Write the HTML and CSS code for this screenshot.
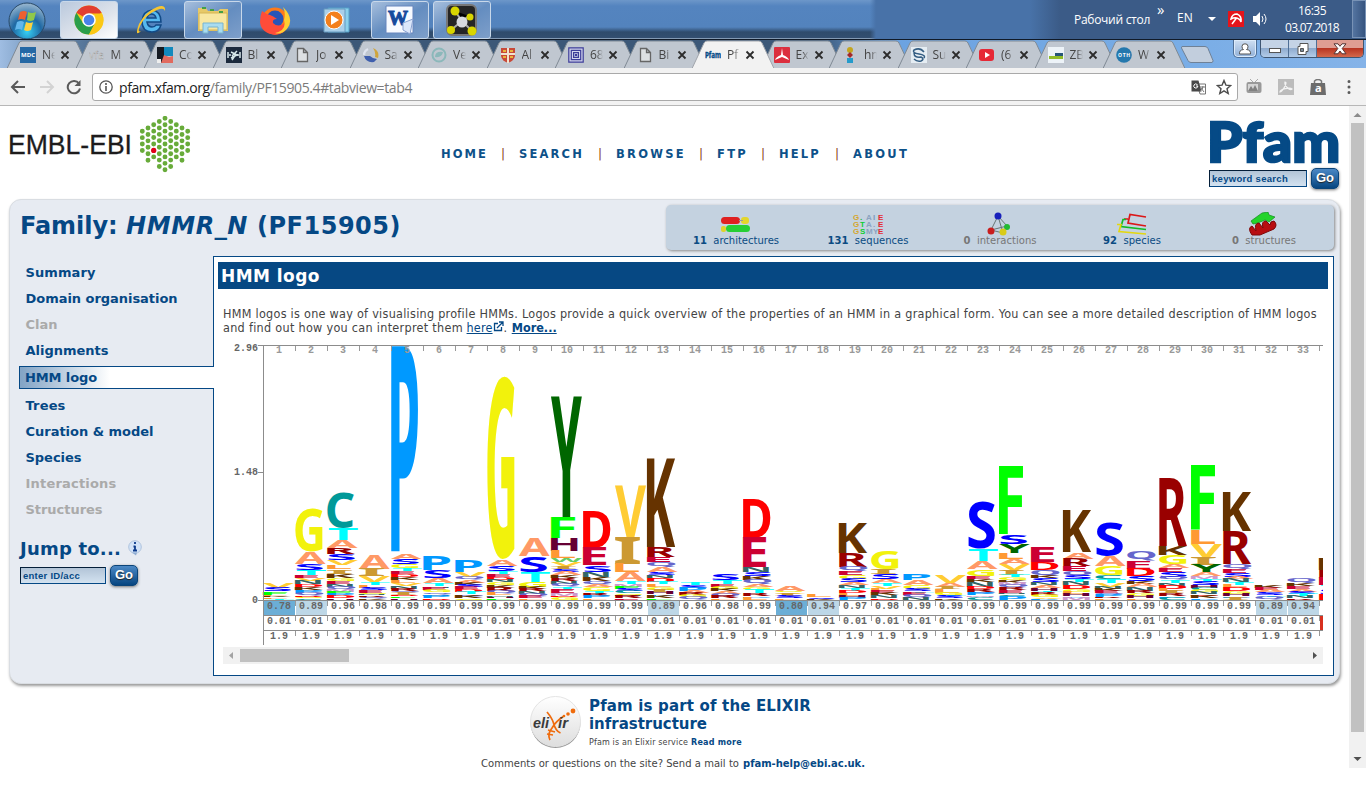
FILE: index.html
```
<!DOCTYPE html>
<html lang="en">
<head>
<meta charset="utf-8">
<title>Pfam: Family: HMMR_N (PF15905)</title>
<link rel="stylesheet" href="styles.css">
</head>
<body>
<div class="taskbar">
  <div class="task start"><svg width="40" height="38" viewBox="0 0 40 38"><defs><radialGradient id="orb" cx=".5" cy=".8" r=".8"><stop offset="0" stop-color="#35d0f5"/><stop offset=".5" stop-color="#2069a4"/><stop offset="1" stop-color="#9db9d0"/></radialGradient></defs><circle cx="20" cy="20" r="18" fill="url(#orb)" stroke="#284968"/><path d="M13 11q4-2 7 0l-2 8q-4-2-7 0z" fill="#ee6030"/><path d="M21 11q4 2 8 0l-2 8q-4 2-7 0z" fill="#8fc84a"/><path d="M10 21q4-2 7 0l-2 8q-3-2-7 0z" fill="#63b7ed"/><path d="M19 21q4 2 7 0l-2 8q-4 2-7 0z" fill="#ffd23f"/></svg></div>
  <div class="task lit"><svg width="30" height="30" viewBox="0 0 30 30"><circle cx="15" cy="15" r="14.5" fill="#fbc816"/><path d="M15 15L2.4 7.7A14.5 14.5 0 0 1 27.6 7.7z" fill="#e23e30"/><path d="M2.4 7.7A14.5 14.5 0 0 0 15 29.5L21 18 9 18z" fill="#2a9e4b"/><path d="M15 8.5h12.9A14.5 14.5 0 0 1 15 29.5l6-11z" fill="#fbc816"/><circle cx="15" cy="15" r="6.8" fill="#fff"/><circle cx="15" cy="15" r="5.3" fill="#4a82ea"/></svg></div>
  <div class="task"><svg width="32" height="32" viewBox="0 0 32 32"><path d="M26 18H12q1 5 5 5 3 0 4-2h5q-2 7-9 7-10 0-10-11Q8 7 17 6q9 1 9 12zM12 14h9q-1-4-4.500-4T12 14z" fill="#56b8ee" stroke="#124a86" stroke-width="1.500"/><path d="M6 27Q-1 34 4 20 10 8 22 3q9-3 8 4-1-4-8-1Q10 11 5 22q-3 7 1 5z" fill="#f6c531"/></svg></div>
  <div class="task open"><svg width="34" height="32" viewBox="0 0 34 32"><path d="M2 4h8l2 3h10l2-2h8v22H2z" fill="#e7c968"/><path d="M3 9h28v17H3z" fill="#f8e7a1" stroke="#d4b557"/><path d="M6 4h4M14 6h4M23 8h4" stroke="#43a047" stroke-width="2"/><path d="M7 29V19h20v10h-5v-6H12v6z" fill="#a9dcf0" stroke="#78b4cf"/></svg></div>
  <div class="task"><svg width="32" height="32" viewBox="0 0 32 32"><circle cx="16" cy="17" r="13.500" fill="#ff7a1a"/><circle cx="16" cy="15" r="8.500" fill="#2955b8"/><path d="M3 7q4 3 8 4 3 1 7 4-5 0-4 4 5 5 12 0 4-7-1-13 7 5 5 14-3 10-14 11Q2 29 1 18 1 12 3 7z" fill="#ff4c39"/><path d="M24 3q12 12 4 22-6 6-12 4 12-3 9-13 2-7-1-13z" fill="#ffcf32"/></svg></div>
  <div class="task"><svg width="30" height="28" viewBox="0 0 30 28"><path d="M6 2h21v24H6z" fill="#8bd0ec" stroke="#559fc6"/><path d="M2 3h21v23H2z" fill="#a9cfe9" stroke="#6799be"/><circle cx="12" cy="14" r="9" fill="#f3801d" stroke="#fff"/><path d="M9 9l8 5-8 5z" fill="#fff"/></svg></div>
  <div class="task open word"><svg width="32" height="30" viewBox="0 0 32 30"><path d="M2 1h27v27H2z" fill="#f7faff" stroke="#6685bd"/><text x="4" y="20" class="word-w">W</text><path d="M19 18l10-4-3 15-7-4z" fill="#dce7fa" stroke="#8aa2d0"/></svg></div>
  <div class="task open mol"><svg width="32" height="34" viewBox="0 0 32 34"><rect x="1" y="2" width="29" height="30" rx="5" fill="#252525" stroke="#777" stroke-width="2"/><path d="M9 8l7 10 7-5M16 18l9 9M16 18L5 27" stroke="#aaa" stroke-width="2"/><circle cx="9" cy="8" r="4.500" fill="#d8d500"/><circle cx="24" cy="14" r="3.500" fill="#d8d500"/><circle cx="26" cy="28" r="4.500" fill="#d8d500"/><circle cx="5" cy="27" r="4" fill="#d8d500"/><circle cx="16" cy="19" r="5.500" fill="#d7dae0"/></svg></div>
  <div class="tray">
    <span class="desk" data-w="76">Рабочий стол</span><span class="chev">»</span><span class="lang">EN</span>
    <svg class="tri" width="8" height="4"><path d="M0 0h8L4 4z" fill="#fff"/></svg>
    <svg class="avira" width="16" height="16"><path d="M0 0h16v16H0z" fill="#e5141b"/><path d="M3 8q1-5 6-5 5 2 4 8-1-3-3-3.500Q7 6 3 8zM8.500 7L4 13" stroke="#fff" fill="none" stroke-width="1.500"/></svg>
    <svg class="vol" width="16" height="16"><path d="M1 5h3l4-4v14l-4-4H1z" fill="#fff"/><path d="M10 5q2 3 0 6M12 3q4 5 0 10" stroke="#fff" fill="none"/></svg>
    <div class="clock"><span data-w="28">16:35</span><span data-w="54">03.07.2018</span></div><div class="peek"></div>
  </div>
</div>

<div class="tabstrip"><div class="tabs" id="tabs"></div>
  <svg class="newtab" width="36" height="20"><path d="M3 1.500h23q2 0 3 2l5 12q0 2-1 2H12q-2 0-3-2L2.500 3q0-1.500.5-1.500z" fill="#c2cedd" stroke="#6f8196"/></svg>
  <div class="user"><svg width="14" height="12"><path d="M4 3.500Q4 .8 7 .8t3 2.700Q10 6 8.500 6.500 13 7 12.500 11h-11Q1 7 5.500 6.500 4 6 4 3.500z" fill="#fff" stroke="#555"/></svg></div>
  <div class="wincontrols"><span class="wc"><svg width="14" height="12"><rect x="1.500" y="5.500" width="11" height="4" fill="#fff" stroke="#555"/></svg></span><span class="wc"><svg width="14" height="12"><path d="M4 .5h8v8h-2v3H2v-8h2z" fill="#fff" stroke="#555"/><path d="M4.500 5.500h3v3h-3z" fill="#789" stroke="#555"/></svg></span><span class="wc close"><svg width="14" height="12"><path d="M1 .8h4l2 2.500 2-2.500h4L9.200 5.500 13 10.800H9L7 8l-2 2.800H1l3.800-5.300z" fill="#fff" stroke="#533"/></svg></span></div>
</div>

<div class="toolbar">
  <svg class="back" width="16" height="16"><path d="M15 8H2M8 2L2 8l6 6" fill="none" stroke="#5a5a5a" stroke-width="2"/></svg>
  <svg class="fwd" width="16" height="16"><path d="M1 8h13M8 2l6 6-6 6" fill="none" stroke="#d3d3d3" stroke-width="2"/></svg>
  <svg class="reload" width="16" height="16"><path d="M13 4.500A6.200 6.200 0 1 0 14 9.500" fill="none" stroke="#5a5a5a" stroke-width="2"/><path d="M14.500 1v6h-6z" fill="#5a5a5a"/></svg>
  <div class="omnibox">
    <svg width="14" height="14"><circle cx="7" cy="7" r="6.200" fill="none" stroke="#555" stroke-width="1.300"/><path d="M7 6v5M7 3v2" stroke="#555" stroke-width="1.600"/></svg>
    <span class="url" data-w="293"><b>pfam.xfam.org</b>/family/PF15905.4#tabview=tab4</span>
    <svg class="translate" width="15" height="15"><path d="M6 4h8.500v10H9z" fill="#fff" stroke="#777"/><path d="M.5.500h7l3 11h-10z" fill="#484848"/><path d="M6.500 4.500Q4 3 3 5t1 3 3-2H5" stroke="#fff" fill="none"/><path d="M9 7h5M12 6q0 4-3 5M10 8l3 4" stroke="#777" fill="none"/></svg>
    <svg class="star" width="16" height="16"><path d="M8 1.500l1.900 4.600 4.800.4-3.700 3.200 1.200 4.800L8 11.900l-4.200 2.600L5 9.700 1.300 6.500l4.800-.4z" fill="none" stroke="#4c4c4c" stroke-width="1.400"/></svg>
  </div>
  <svg class="ext1" width="16" height="16"><path d="M4 0l3 3M12 0L9 3" stroke="#aaa"/><rect x=".5" y="3" width="15" height="11" rx="2" fill="#999"/><rect x="2" y="5" width="10" height="7" fill="#d4d4d4"/><path d="M2 12l3-5 2 3 2-4 3 6z" fill="#808080"/></svg>
  <svg class="ext2" width="16" height="16"><path d="M0 0h16v16H0z" fill="#bcbcbc"/><path d="M7 3c3 0-2 9-5 10 0-3 10-5 12-3-2 2-8-3-7-7z" fill="none" stroke="#f3f3f3" stroke-width="1.200"/></svg>
  <svg class="ext3" width="16" height="16"><path d="M4.500 4V2q3.500-3 7 0v2" fill="none" stroke="#777" stroke-width="1.500"/><path d="M1 4h14l1 12H0z" fill="#6c6c6c"/><text x="5" y="13" class="ext-a">a</text></svg>
  <svg class="dots" width="4" height="16"><path d="M2 2.500v.01M2 8v.01M2 13.500v.01" stroke="#5a5a5a" stroke-width="3" stroke-linecap="round"/></svg>
</div>

<div class="viewport">
<div class="page">
  <div class="header">
    <svg class="embl" width="184" height="58"><text x="-1" y="37.500" class="embl-t" textLength="124" lengthAdjust="spacingAndGlyphs">EMBL-EBI</text>
      <path class="hexdots" d="M133.300 15.200v25.700M139 12v32.200M144.700 8.700v38.600M150.300 5.500v45.100M156 2.300v51.500M161.700 5.500v45.100M167.300 8.700v38.600M173 12v32.200M178.700 15.200v25.700"/><circle cx="144.700" cy="34.400" r="2.600" fill="#e2001a"/></svg>
    <div class="nav"><div><a data-w="47">HOME</a><i>|</i></div><div><a data-w="65">SEARCH</a><i>|</i></div><div><a data-w="70">BROWSE</a><i>|</i></div><div><a data-w="31">FTP</a><i>|</i></div><div><a data-w="42">HELP</a><i>|</i></div><div><a data-w="56">ABOUT</a></div></div>
    <div class="brand"><svg width="132" height="45"><text x="-2" y="43" class="pfam-t" textLength="133" lengthAdjust="spacingAndGlyphs">Pfam</text></svg>
      <div class="search"><span class="field kw"><span data-w="76">keyword search</span></span><span class="go">Go</span></div></div>
  </div>

  <div class="family">
    <div class="titlerow"><h1><span data-w="106">Family: </span><em data-w="122">HMMR_N</em><span data-w="144">(PF15905)</span></h1>
      <div class="stats">
        <div><svg width="32" height="24"><rect x="1" y="5" width="19" height="7" rx="3.500" fill="#df2020"/><rect x="21" y="5" width="8" height="7" rx="3" fill="#e3d62b"/><path d="M19 8.500h4M5 17h4" stroke="#999"/><rect x="1" y="14" width="5" height="6" rx="2" fill="#dfd22b"/><rect x="6" y="13" width="24" height="7" rx="3.500" fill="#26cf35"/></svg><span data-w="86"><b>11</b>&nbsp; architectures</span></div>
        <div><svg width="32" height="24" class="seq"><text x="1" y="8" fill="#d5a62e">G</text><text x="8" y="8" fill="#22b244">.</text><text x="14" y="8" fill="#8ba3c1">A</text><text x="21" y="8" fill="#7f9dbf">I</text><text x="26" y="8" fill="#e32b35">E</text><text x="1" y="15" fill="#d5a62e">G</text><text x="8" y="15" fill="#10cd32">T</text><text x="14" y="15" fill="#8ba3c1">A</text><text x="21" y="15" fill="#8ba3c1">.</text><text x="26" y="15" fill="#e32b35">E</text><text x="1" y="22" fill="#d5a62e">G</text><text x="8" y="22" fill="#10cd32">S</text><text x="14" y="22" fill="#8ba3c1">M</text><text x="21" y="22" fill="#8ba3c1">Y</text><text x="26" y="22" fill="#e32b35">E</text></svg><span data-w="81"><b>131</b>&nbsp; sequences</span></div>
        <div class="off"><svg width="32" height="24"><path d="M14 4L7 18l12 3 4-7-9-10 5 17M7 18l16-4" fill="none" stroke="#677" /><circle cx="14" cy="4" r="3.500" fill="#1720bb"/><circle cx="7" cy="19" r="3.500" fill="#c91e1e"/><circle cx="23" cy="15" r="3" fill="#22ba32"/><circle cx="19" cy="20" r="3.500" fill="#d9cb18"/></svg><span data-w="73"><b>0</b>&nbsp; interactions</span></div>
        <div><svg width="32" height="24"><path d="M30 5L14 2.500l-2 8.500 18 3M12 7H8" fill="none" stroke="#db1717" stroke-width="1.700"/><path d="M30 17.500L5 14.500l2-7h3" fill="none" stroke="#12bb24" stroke-width="1.700"/><path d="M30 22L3 19.500l2-7H1" fill="none" stroke="#e3d710" stroke-width="1.700"/></svg><span data-w="58"><b>92</b>&nbsp; species</span></div>
        <div class="off"><svg width="32" height="24"><path d="M3 9L14 1l6-1 1 3 6 2-6 5-4-2-7 3-5 1z" fill="#23d42b" stroke="#138b20" stroke-width=".7"/><path d="M4 23q-5-7 0-9l4 5q-2-8 3-8l4 5q-2-7 3-7l4 4q0-4 4-4 4 4 0 8L12 23z" fill="#b80d10" stroke="#7d0809"/></svg><span data-w="64"><b>0</b>&nbsp; structures</span></div>
      </div></div>
    <div class="main">
      <div class="side">
        <ul><li><span data-w="70">Summary</span></li><li><span data-w="152">Domain organisation</span></li><li class="off"><span data-w="32">Clan</span></li><li><span data-w="83">Alignments</span></li><li class="active"><span data-w="72">HMM logo</span></li><li><span data-w="40">Trees</span></li><li><span data-w="128">Curation &amp; model</span></li><li><span data-w="56">Species</span></li><li class="off"><span data-w="91">Interactions</span></li><li class="off"><span data-w="77">Structures</span></li></ul>
        <div class="jump"><h2 data-w="101">Jump to...</h2><svg width="16" height="16"><circle cx="8" cy="7" r="6.300" fill="#d2e3f8" stroke="#b0c4de"/><path d="M5 12.500l4 3 1-3z" fill="#8dacd2"/><path d="M8 6v5M8 2v2M6.500 6.500h2M6 10.500h4" stroke="#0d3b8c" stroke-width="1.800"/></svg></div>
        <div class="search"><span class="field"><span data-w="57">enter ID/acc</span></span><span class="go">Go</span></div>
      </div>
      <div class="content">
        <h3><span data-w="99">HMM logo</span></h3>
        <p><span data-w="1094">HMM logos is one way of visualising profile HMMs. Logos provide a quick overview of the properties of an HMM in a graphical form. You can see a more detailed description of HMM logos</span><br><span data-w="240">and find out how you can interpret them</span> <u data-w="26">here</u><svg width="11" height="11"><path d="M5 2.500H1.500v7h7V6M4 7l5.500-5.500M6 1h4v4" fill="none" stroke="#054885" stroke-width="1.300"/></svg>. <b><u data-w="45">More...</u></b></p>
        <svg class="logo" id="logo" width="1100" height="305" viewBox="223 340 1100 305"></svg>
        <div class="hscroll"><svg width="17" height="17"><path d="M10 5v7L6 8.500z" fill="#a3a3a3"/></svg><div class="hthumb"></div><svg class="r" width="17" height="17"><path d="M7 5v7l4-3.500z" fill="#505050"/></svg></div>
      </div>
    </div>
  </div>

  <div class="footer">
    <div class="elixir"><svg width="54" height="54"><defs><linearGradient id="disc" x2="0" y2="1"><stop stop-color="#fff"/><stop offset="1" stop-color="#dedede"/></linearGradient></defs><circle cx="26.500" cy="27" r="25" fill="#999"/><circle cx="26.500" cy="25.500" r="25" fill="url(#disc)" stroke="#e4e4e4"/><path d="M18 16q5 6 6.500 11 2 8 7 10M35 20q-8 5-12 12-5 6-2 12M19 34l7 2M18 38l6 1" fill="none" stroke="#ef6b0c" stroke-width="1.700"/><circle cx="35" cy="20" r="1.300" fill="#ef6b0c"/><circle cx="39" cy="18" r="1.800" fill="#ef6b0c"/><circle cx="44" cy="15" r="2.400" fill="#ef6b0c"/><text x="4" y="32" class="elx" textLength="16" lengthAdjust="spacingAndGlyphs">eli</text><text x="29" y="32" class="elx" textLength="10" lengthAdjust="spacingAndGlyphs">ir</text></svg>
      <div><h4><span data-w="222">Pfam is part of the ELIXIR</span><br><span data-w="118">infrastructure</span></h4><div class="tiny"><span data-w="99">Pfam is an Elixir service</span><b data-w="51">Read more</b></div></div></div>
    <div class="contact"><span data-w="258">Comments or questions on the site? Send a mail to</span><b data-w="122">pfam-help@ebi.ac.uk.</b></div>
  </div>
</div>
<div class="vscroll"><svg width="17" height="17"><path d="M4.500 11h8L8.500 7z" fill="#8b8b8b"/></svg><div class="vthumb"></div><svg class="b" width="17" height="17"><path d="M4.500 6h8l-4 4z" fill="#505050"/></svg></div>
</div>
<script src="app.js"></script>
</body>
</html>
```
FILE: styles.css
```
* { box-sizing: border-box; }
body { margin: 0; width: 1366px; height: 794px; overflow: hidden; background: #fff; display: flex; flex-direction: column; font-family: "DejaVu Sans", Verdana, sans-serif; color: #444; }
svg { display: block; flex: none; }
[data-w] { display: inline-block; white-space: nowrap; }

.taskbar { height: 40px; flex: none; display: flex; padding-left: 0; border-bottom: 1px solid #101a28; background: linear-gradient(90deg, transparent 870px, #4872a8 876px, #4872a8 1030px, #3b5b87 1060px), linear-gradient(#6d97c9 0, #5484bf 6px, #5383bd 27px, #2f4b6c 32px, #334e70 38px, #8399b3 38px); font-family: "Open Sans", sans-serif; }
.task { width: 62px; height: 39px; flex: none; display: flex; align-items: center; justify-content: center; }
.task.start { width: 60px; padding-right: 6px; }
.task.lit, .task.open { width: 58px; margin: 1px 4px 0 0; height: 38px; border: 1px solid #c8d8ea; border-radius: 3px; background: linear-gradient(150deg, #a7bfdd, #648dc0 50%, #7e9fca); }
.task.open { margin: 1px 2px 0 2px; }
.task.lit { background: linear-gradient(150deg, #bac9dd, #dfe4ec 60%, #fff); margin-right: 2px; }
.task.word { margin: 1px 2px 0 3px; }
.word-w { font: bold 20px "Liberation Serif", serif; fill: #164a9c; stroke: #164a9c; }
.tray { display: flex; align-items: center; margin-left: auto; color: #fff; font-size: 12px; height: 38px; }
.chev { align-self: flex-start; margin: -1px 0 0 7px; font-size: 15px; line-height: 20px; width: 10px; }
.lang { margin: -4px 0 0 10px; width: 16px; }
.tri { margin-left: 15px; }
.avira { margin-left: 12px; }
.vol { margin-left: 8px; }
.clock { display: flex; flex-direction: column; align-items: center; width: 60px; line-height: 17px; margin-left: 14px; }
.peek { width: 14px; height: 38px; margin-left: 10px; border: 1px solid #7892b5; background: linear-gradient(90deg, #5474a0, #36547f); }

.tabstrip { height: 28px; flex: none; display: flex; background: linear-gradient(90deg, #9fbde2 0, #7194ba 40px, #3c5878 130px, #3c5878 780px, #3c5878 820px, #6ba2e0 880px, #79ade6 1180px, #85b3e8 1366px); }
.tabs { display: flex; padding-left: 7px; width: 1179px; flex: none; }
.tab { width: 68.5px; height: 28px; position: relative; flex: none; display: flex; align-items: center; padding-left: 13px; }
.tab .shape { position: absolute; left: 0; top: 0; }
.tab .fav { position: relative; margin-top: 2px; }
.tab .name { position: relative; width: 13px; margin: 1px 0 0 6px; overflow: hidden; white-space: nowrap; font: 12px "Open Sans", sans-serif; color: #444; -webkit-mask-image: linear-gradient(90deg, #000 50%, transparent); }
.tab .x { position: relative; margin: 2px 0 0 5px; }
.newtab { margin-top: 5px; }
.user { width: 24px; height: 18px; margin-left: 18px; display: flex; justify-content: center; align-items: center; border: 1px solid #4f6f96; border-top: 0; border-radius: 0 0 5px 5px; background: linear-gradient(#cfdff2, #90b0d8); box-shadow: inset 0 0 0 1px #dcebfb; }
.wincontrols { display: flex; height: 18px; margin-left: 3px; border: 1px solid #3f5672; border-top: 0; border-radius: 0 0 5px 5px; overflow: hidden; }
.wc { width: 28px; display: flex; align-items: center; justify-content: center; background: linear-gradient(#c4d3e6 45%, #8fabce 50%, #b3cce9); border-right: 1px solid #4f6f96; }
.wc.close { width: 46px; border: 0; background: linear-gradient(#df9d92 45%, #b83522 50%, #d4694c); }

.toolbar { height: 38px; flex: none; display: flex; align-items: center; background: #f2f2f2; border-top: 1px solid #f2f2f2; border-bottom: 1px solid #b7b7b7; padding-left: 10px; }
.fwd { margin-left: 13px; }
.reload { margin-left: 11px; }
.omnibox { width: 1146px; height: 28px; margin-left: 10px; display: flex; align-items: center; padding: 0 6px 0 6px; background: #fff; border: 1px solid #a9a9a9; border-radius: 3px; }
.url { font: 14px "Open Sans", sans-serif; color: #7b7b7b; margin-left: 6px; }
.url b { font-weight: 400; color: #222; }
.translate { margin-left: auto; }
.star { margin-left: 10px; margin-right: -1px; }
.ext1 { margin-left: 8px; }
.ext2, .ext3 { margin-left: 16px; }
.ext-a { font: bold 11px "Open Sans", sans-serif; fill: #fff; }
.dots { margin-left: 21px; }

.viewport { height: 662px; flex: none; display: flex; }
.page { width: 1349px; padding-left: 9px; }
.header { height: 93px; display: flex; align-items: flex-start; }
.embl { margin-top: 10px; }
.embl-t { font: 27px "Liberation Sans", Arial, sans-serif; fill: #1d1b1c; stroke: #1d1b1c; stroke-width: .3; }
.hexdots { fill: none; stroke: #68ab3a; stroke-width: 4.900; stroke-linecap: round; stroke-dasharray: 0 6.437; }
.nav { display: grid; grid-template-columns: 78px 97px 101px 62px 74px 60px; margin: 40px 0 0 248px; font-weight: bold; font-size: 11.500px; line-height: 16px; color: #0d5189; }
.nav div { display: flex; justify-content: space-between; padding-right: 12px; }
.nav i { font-style: normal; font-weight: normal; font-size: 12px; color: #8a3a20; width: 6px; }
.brand { margin: 13px 0 0 296px; width: 132px; }
.pfam-t { font: 900 55px Lato, sans-serif; fill: #054a86; stroke: #054a86; stroke-width: 2.500; }
.search { display: flex; align-items: center; }
.brand .search { margin-top: 4px; }
.field { width: 86px; height: 17px; border: 1px solid #054885; border-top: 1px solid #041e38; border-left: 1px solid #041e38; background: linear-gradient(#b2c4d7, #d3e2f0); color: #054885; font: bold 9.500px/15px "Liberation Sans", sans-serif; padding-left: 2px; white-space: nowrap; }
.kw { width: 98px; }
.go { width: 28px; height: 21px; margin-left: 4px; border-radius: 5px; background: linear-gradient(#4b88c5, #064580); border: 1px solid #0b4479; color: #fff; font: bold 13px/18px "Liberation Sans", sans-serif; text-align: center; box-shadow: 0 1px 3px #777; text-shadow: 0 1px 1px #222; }

.family { width: 1331px; height: 485px; background: #e7ebf2; border-radius: 12px; border: 1px solid #d9dde2; box-shadow: 1px 2px 3px #999; }
.titlerow { display: flex; justify-content: space-between; height: 56px; padding: 5px 5px 0 10px; }
h1, h2, h3, h4 { margin: 0; color: #054885; font-weight: bold; }
h1 { font-size: 24px; line-height: 42px; display: flex; }
h1 [data-w] { white-space: pre; }
h1 em + span { margin-left: 9px; }
.stats { width: 668px; height: 45px; display: grid; grid-template-columns: repeat(5, 132px); padding-left: 4px; background: #c4d2e0; border-radius: 5px; box-shadow: 1px 1px 3px #888; }
.stats div { display: flex; flex-direction: column; align-items: center; padding-top: 7px; font-size: 10px; line-height: 11px; color: #0a4b82; }
.stats .off { color: #777; }
.stats span { margin-top: -1px; }
.seq text { font: bold 8px "Liberation Sans", sans-serif; }
.main { display: flex; }
.side { width: 203px; position: relative; padding-left: 10px; padding-top: 4px; font-weight: bold; color: #054885; }
ul { list-style: none; margin: 0; padding: 0; font-size: 13px; }
li { height: 26px; line-height: 26px; padding-left: 5.500px; }
li.off { color: #aaa; }
li.active { width: 195px; height: 23px; line-height: 22px; margin: 2px 0 4px -1px; padding-left: 5px; position: relative; border: 1px solid #054885; border-right: 0; background: linear-gradient(90deg, #84a5c6 2px, #fff 90px); }
li.active ~ li { margin-top: 0; }
.jump { display: flex; align-items: center; height: 32px; margin: 10px 0 0 0; }
.jump h2 { font-size: 18px; line-height: 30px; }
.jump svg { margin: -3px 0 0 6px; }
.content { width: 1121px; height: 420px; border: 1px solid #054885; background: #fff; padding: 5px 5px 0 4px; }
h3 { height: 27px; line-height: 29px; background: #064883; color: #fff; font-size: 17px; padding-left: 3px; }
p { margin: 18px 0 0 5px; height: 33px; font-size: 12.500px; line-height: 14px; font-family: "DejaVu Sans Condensed", "DejaVu Sans", sans-serif; font-stretch: condensed; }
p svg { display: inline-block; }
p u { color: #054885; }
p b { margin-left: 1px; }
.logo { margin-left: 5px; }
.row { font: bold 10px "Liberation Mono", monospace; fill: #666; text-anchor: middle; }
.num { fill: #999; }
.ax { text-anchor: end; }
.hscroll { width: 1100px; height: 17px; margin: 2px 0 0 5px; background: #f1f1f1; display: flex; align-items: center; }
.hthumb { width: 109px; height: 13px; background: #c1c1c1; }
.r { margin-left: auto; }

.footer { display: flex; flex-direction: column; }
.elixir { display: flex; margin: 12px 0 0 520px; height: 58px; }
.elx { font: italic bold 15px "Liberation Sans", sans-serif; fill: #3b3b3b; }
h4 { font-size: 15px; line-height: 18px; margin: 1px 0 0 6px; }
.tiny { display: flex; gap: 3px; font-size: 8px; line-height: 10px; margin: 5px 0 0 6px; }
.footer b { color: #054885; }
.contact { display: flex; gap: 4px; font-size: 10px; line-height: 13px; margin: 3px 0 0 472px; }
.vscroll { width: 17px; background: #f1f1f1; display: flex; flex-direction: column; align-items: center; }
.vthumb { width: 13px; height: 609px; background: #c1c1c1; }
.b { margin-top: auto; }
```
FILE: app.js
```
// Browser tabs: title and favicon drawing
var page = '<path d="M3.500 1.500h6l4 4v9h-10zM9.500 1.500v4h4" fill="#dde0e3" stroke="#666" stroke-width="1.300"/>';
var tabs = [
  ["N‹", '<path d="M0 0h16v16H0z" fill="#2468a5"/><text x="1" y="10" font-size="6" font-weight="bold" fill="#fff" textLength="14">MDC</text>'],
  ["M", '<text x="0" y="12" font-size="11" fill="#f5f5f5" stroke="#999" stroke-width=".4" textLength="15">vfa</text>'],
  ["Co", '<path d="M0 0h7v16H0z" fill="#151a22"/><path d="M7 0h9v9H7z" fill="#1289bd"/><path d="M7 8l5 2 4-1v7H4z" fill="#e16a5e"/><path d="M0 12h4v4H0z" fill="#eee"/>'],
  ["Bl", '<path d="M0 0h16v16H0z" fill="#1c2a3d"/><path d="M2 5v6M4 7v2M14 5v6M12 7v2M5 5l6 3-6 3M11 4L6 9M10 7l-4 6" stroke="#d7e8ea" stroke-width="1.500" fill="none"/>'],
  ["Jo", page],
  ["Sa", '<path d="M1 9q2 7 10 6l3-3q-4 0-7-3z" fill="#3f5fad"/><path d="M10 1q7 3 5 10l-3-1q1-5-2-9z" fill="#d0a53d"/><path d="M1 8q0-4 4-6" stroke="#dfe4ef" stroke-width="2.500" fill="none"/>'],
  ["Ve", '<circle cx="8" cy="8" r="6.500" fill="none" stroke="#8bb8ba" stroke-width="2"/><path d="M4 10q0-6 8-5-1 6-8 5l-1 3" fill="#8bb8ba"/>'],
  ["Al", '<path d="M1 1h14v8q-1 5-7 7-6-2-7-7z" fill="#c84938"/><path d="M8 1v15M1 7h14" stroke="#f1e2cf" stroke-width="2"/><path d="M3 4h3M10 4h3M3 10h3M10 10h3" stroke="#e9b53c" stroke-width="2"/>'],
  ["68", '<path d="M.8.8h14.400v14.400H.8zM3.300 3.300h9.400v9.400H3.300zM5.600 5.600h4.800v4.800H5.600zM7.500 7.500h1v1h-1z" fill="#d2d4ec" stroke="#3c3c99" stroke-width="1.200"/>'],
  ["Bi", page],
  ["Pf", '<text x="0" y="11" font-size="8" font-weight="bold" fill="#054a86" stroke="#054a86" stroke-width=".4" textLength="16" lengthAdjust="spacingAndGlyphs">Pfam</text>'],
  ["Ex", '<rect width="16" height="16" rx="1" fill="#dc2f3e"/><path d="M8 1l1 7-1 2-1-2zM7 8l1 2-7 3q1-3 6-5zM9 8q5 2 6 5L8 10z" fill="#fff"/>'],
  ["hn", '<circle cx="8" cy="3" r="3" fill="#c4a51f"/><path d="M8 5l3 3-3 3-3-3z" fill="#a32a2a"/><path d="M5 11h6v5H5z" fill="#249bcb"/>'],
  ["Su", '<path d="M0 0h16v16H0z" fill="#e5edf3"/><path d="M13 5Q9 0 3 3q-2 3 5 4 7 1 5 4M3 6q0 5 7 4 4 2 0 4-4 1-7-2" fill="none" stroke="#355e83" stroke-width="1.500"/>'],
  ["(6", '<rect y="2" width="15" height="12" rx="3" fill="#e62835"/><path d="M6 5v6l5-3z" fill="#fff"/>'],
  ["ZB", '<path d="M0 0h16v16H0z" fill="#edf3f8"/><path d="M1 9h14v3H1z" fill="#92bd28"/><path d="M7 6h8v3H7z" fill="#275678"/>'],
  ["W", '<circle cx="8" cy="8" r="7.800" fill="#2478ad"/><text x="2" y="10" font-size="5" font-weight="bold" fill="#fff" textLength="12">OTH</text>']
];
tabs[0][0] = "Ne";
document.getElementById("tabs").innerHTML = tabs.map(function (t, i) {
  var on = i === 10;
  return '<div class="tab"' + (on ? ' style="z-index:2"' : '') + '><svg class="shape" width="84" height="28"><path d="M0 28.500L12 3q1-2 3-2h52q2 0 3 2l12 25.500" fill="' +
    (on ? '#f2f2f2' : '#c0c7d0') + '" stroke="' + (on ? '#a0a4aa' : '#7f8994') + '"/></svg><svg class="fav" width="16" height="16" font-family="Open Sans">' + t[1] +
    '</svg><span class="name">' + t[0] + '</span><svg class="x" width="10" height="10"><path d="M1.500 1.500l7 7M8.500 1.500l-7 7" stroke="#2c2c2c" stroke-width="1.800"/></svg></div>';
}).join("");

// Fit labels to their nominal widths
document.querySelectorAll("[data-w]").forEach(function (el) {
  var n = el.textContent.length;
  el.style.letterSpacing = ((+el.dataset.w - el.getBoundingClientRect().width) / n).toFixed(3) + "px";
});

// HMM logo: residues with the top of each, in thirds of a pixel
var colour = { A: "#ff9966", C: "#009999", D: "#ff0000", E: "#cc0033", F: "#00ff00", G: "#f2f20c", H: "#660033", I: "#cc9933", K: "#663300", L: "#ff9933", M: "#cc99cc", N: "#336666", P: "#0099ff", Q: "#6666cc", R: "#990000", S: "#0000ff", T: "#00ffff", V: "#ffcc33", W: "#66cc66", Y: "#006600" };
var width = { A: 31, C: 27, D: 27.5, E: 23.5, F: 24, G: 27.5, H: 26.5, I: 25, K: 28.5, L: 24, M: 27, N: 26, P: 27, Q: 28.5, R: 28, S: 27, T: 29.5, V: 31, W: 31, Y: 31 };
var stacks = [
  "V729 S743 L753 F758 L765 K768 L772 T776", "G504 A636 S672 T690 E705 V713 N722 D732 K741 L749 P754 Q760 D767 G770 C774",
  "C457 T564 A600 R624 S642 V660 L675 I688 K701 G713 E722 N731 Q740 M749 F755 P761 D768 H774", "A645 I687 V708 T726 L735 S743 E751 G758 N762 R765 Q770 K775",
  "P14 A642 S657 G672 T684 E693 D702 K711 L720 V729 N738 R747 Q753 I758 D765 F769 H774", "P648 S690 A713 T729 N738 E743 G751 Q757 N763 P768 D774",
  "P660 V696 Q711 A720 K729 S736 E742 D748 T755 Q762 K768 G774", "G108 A660 S678 T693 E702 D711 N720 G727 K734 R743 Q753 L760 N766 H771 F775",
  "A594 S648 T696 G726 K740 R746 N753 Q761 E768 L774", "Y168 F531 H594 L633 W654 V666 I678 S687 A696 K706 R714 N723 Q732 T741 E750 M760 D767 G772",
  "D513 E624 S676 N695 K712 Q724 A734 G742 T753 R762 P768 L774", "V435 I591 L672 A697 T724 M732 F741 S747 C753 G759 N764 R768 E774",
  "K354 R621 E651 Q666 A681 S695 N704 D713 T725 L732 G741 I750 H757 P763 K768 F775", "T726 S735 P743 A753 R759 G765 Q772",
  "S702 T720 E732 G741 K748 A754 Q761 R768 L774", "D477 E594 N681 S697 K708 Q720 A732 G741 T750 R760 P768 L773",
  "A738 G752 V757 I762 S769 L775", "L765 S771 K776", "K552 R639 Q681 E693 G706 S716 A727 N735 T744 D753 L760 H767 P773",
  "G633 I687 S701 A718 T730 V738 L746 E753 K760 N766 D774", "P702 A720 G735 S748 T754 E759 Q766 N773", "V708 A730 I741 L747 G759 T765 S769 K775",
  "S483 T627 A663 G687 E708 K716 N725 D740 R747 Q755 P760 M766 C771", "F378 S585 Y612 L639 A657 V673 I690 T705 G712 K720 M728 Q735 R743 E751 N758 C763 P768",
  "E621 D666 Q690 K708 S715 N725 A734 H743 T752 R757 G765 V771 P776", "K507 A636 R657 E678 Q694 S706 T717 N725 D736 G747 L755 H761 P768 M773",
  "S546 A648 G678 C705 T716 V729 N742 K748 E754 Q760 P764 R770 L775", "Q636 E663 D687 S708 K722 A731 N741 R753 G760 H768 L774",
  "R412 K618 G645 A672 E684 S696 Q710 T720 N729 D737 L747 I754 R760 P768 C773", "F375 L570 V612 I651 Y675 A696 M708 T717 S726 H736 C744 G750 N757 D763 K768 P774",
  "K456 R573 Q672 E687 S700 A710 N717 T727 L735 D742 G753 H762 P768 I773", "K735 E743 A750 S757 T765 Q770",
  "Q717 K729 E738 A747 S755 T762 N768 R774", "K654 R690 E714 T735 S747 D762"
];
var occ = "0.78 0.89 0.96 0.98 0.99 0.99 0.99 0.99 0.99 0.99 0.99 0.99 0.89 0.96 0.98 0.99 0.80 0.94 0.97 0.98 0.99 0.99 0.99 0.99 0.99 0.99 0.99 0.99 0.99 0.99 0.99 0.89 0.94".split(" ");
var shade = { "0.78": "#6baed6", "0.80": "#6baed6", "0.89": "#bdd7e7", "0.94": "#bdd7e7" };
var ctx = document.createElement("canvas").getContext("2d");
ctx.font = "bold 100px 'Noto Sans'";
var out = "";
stacks.forEach(function (s, i) {
  var x0 = 263.5 + 32 * i, list = s.split(" ");
  if (shade[occ[i]]) out += '<rect x="' + (x0 + .5) + '" y="601" width="31" height="14" fill="' + shade[occ[i]] + '"/>';
  if (i === 33) out += '<path d="M1320 616h3v14h-3z" fill="#d7301f"/>';
  list.forEach(function (e, k) {
    var ch = e[0], top = +e.slice(1), end = k + 1 < list.length ? +list[k + 1].slice(1) : 779;
    // The two tallest residues leave a gap above the rest of the stack
    if (end - top > 500) end = i === 4 ? 642 : 657;
    var m = ctx.measureText(ch);
    var sx = width[ch] / (m.actualBoundingBoxRight + m.actualBoundingBoxLeft);
    var sy = (end - top) / 3 / (m.actualBoundingBoxAscent + m.actualBoundingBoxDescent);
    var lx = x0 - .5 + ("ST".indexOf(ch) >= 0 ? 1.2 : 0) + m.actualBoundingBoxLeft * sx;
    var by = 340 + end / 3 - m.actualBoundingBoxDescent * sy;
    out += '<text font-family="Noto Sans" font-weight="bold" font-size="100" fill="' + colour[ch] + '" transform="translate(' + lx.toFixed(2) + ' ' + by.toFixed(2) + ') scale(' + sx.toFixed(4) + ' ' + sy.toFixed(4) + ')">' + ch + '</text>';
  });
  var c = x0 + 15.5;
  if (i < 33) {
    out += '<text class="row num" x="' + c + '" y="353">' + (i + 1) + '</text><text class="row" x="' + c + '" y="609">' + occ[i] + '</text><text class="row" x="' + c + '" y="624">0.01</text><text class="row" x="' + c + '" y="639">1.9</text>';
  }
  if (i) out += '<path d="M' + x0 + ' 345v6M' + x0 + ' 600v6M' + x0 + ' 615v6M' + x0 + ' 630v6" stroke="#999"/>';
});
out += '<path d="M263.500 345v300M258 345.500h1065M258 472.500h6M258 600.500h1065M263 615.500h1060M263 630.500h1060" stroke="#8c8c8c" fill="none"/>' +
  '<text class="row ax" x="258" y="351">2.96</text><text class="row ax" x="258" y="475">1.48</text><text class="row ax" x="258" y="603">0</text>';
document.getElementById("logo").innerHTML = out;
```
